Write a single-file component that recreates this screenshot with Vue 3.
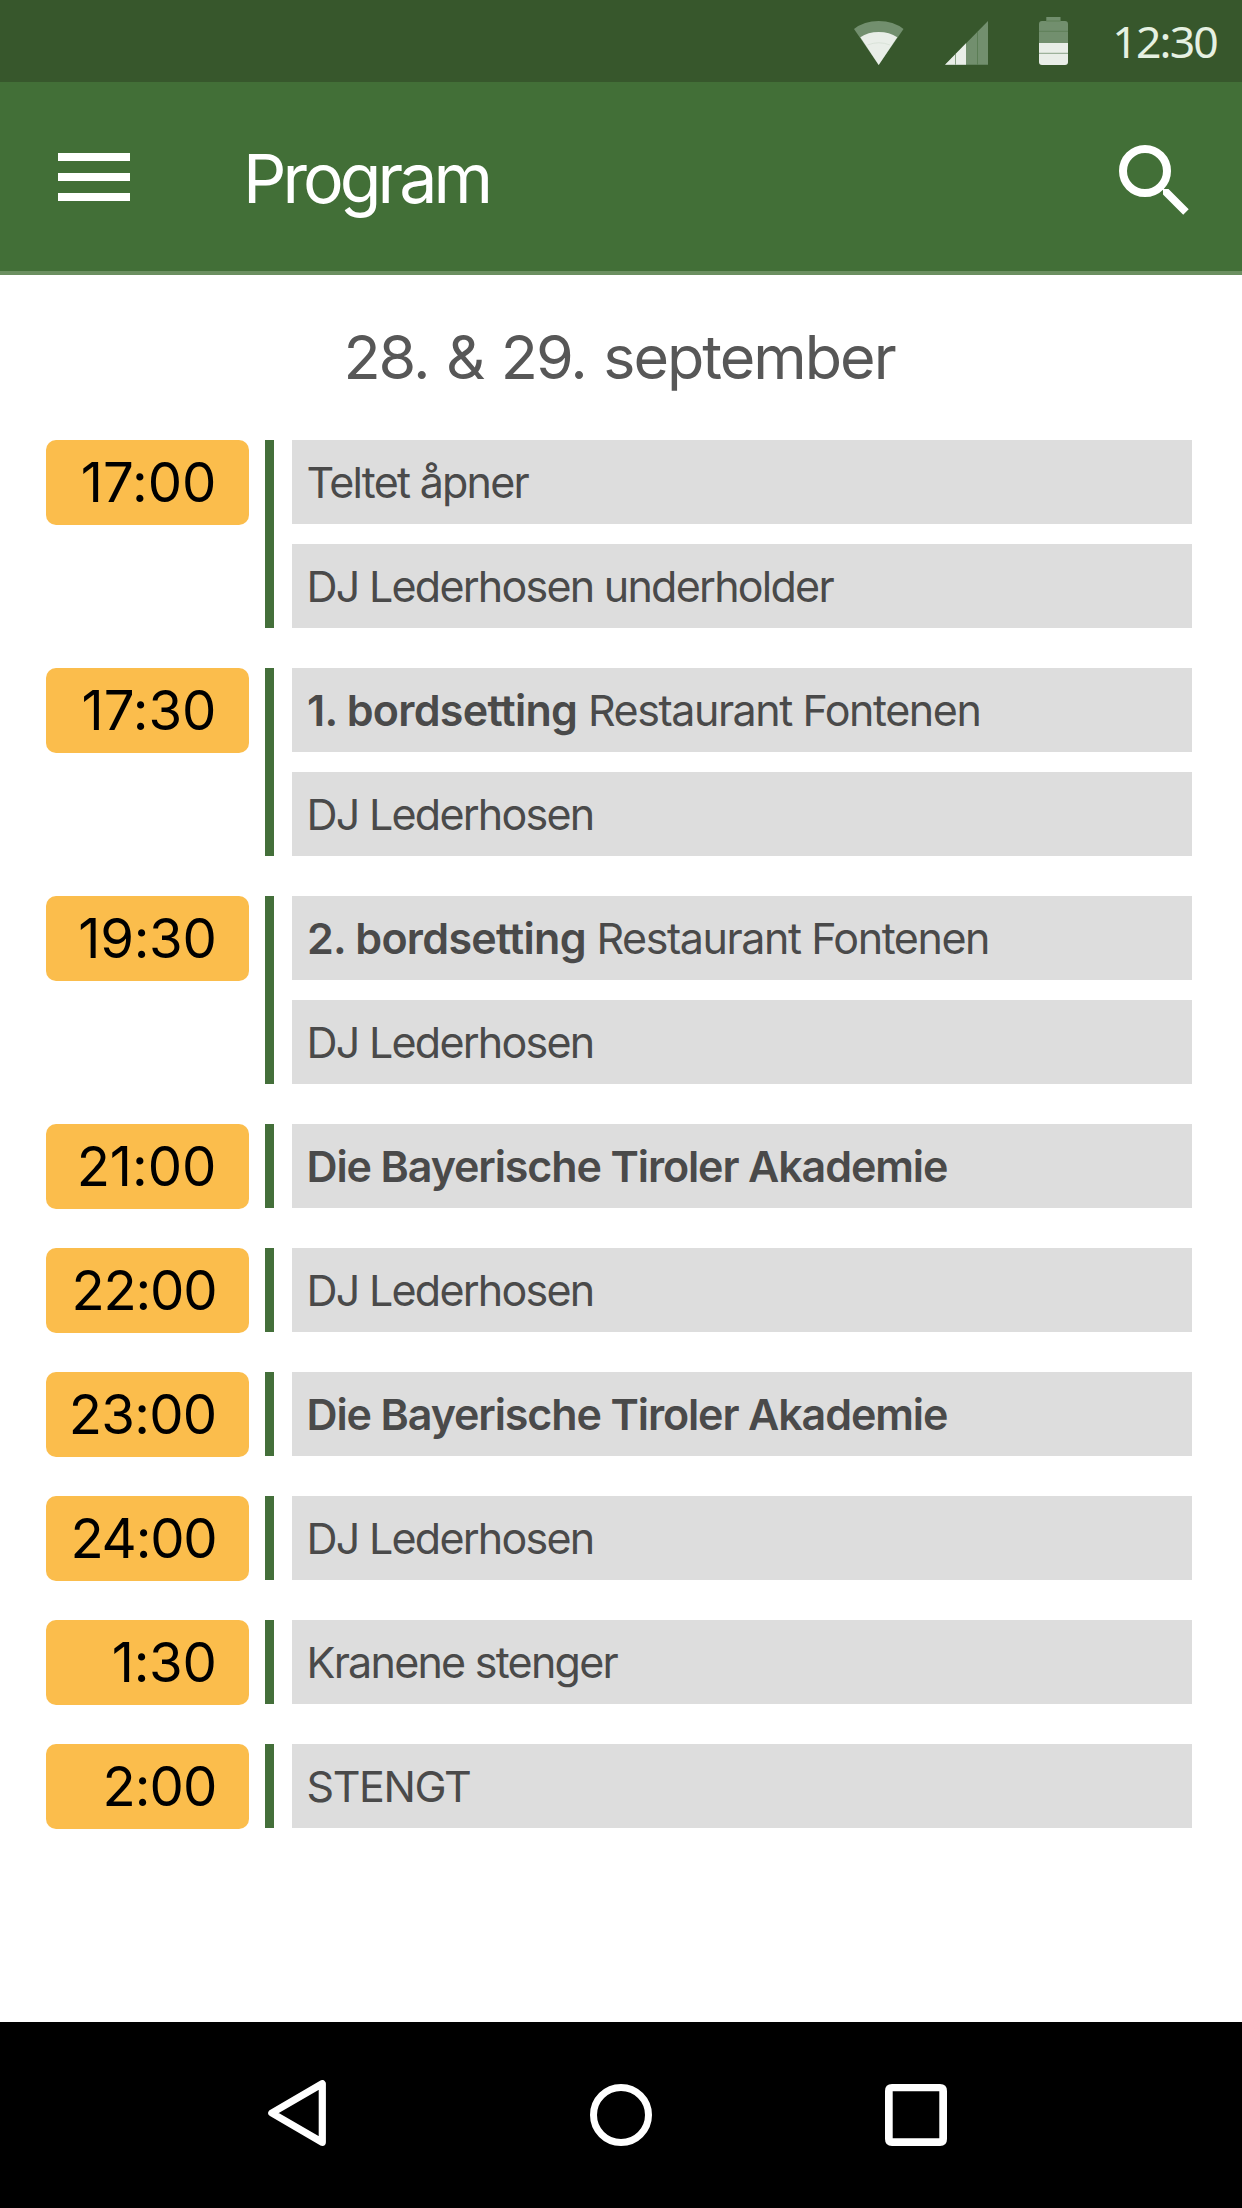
<script setup>
import { ref } from 'vue'

const title = ref('Program')
const dates = ref('28. & 29. september')

const program = ref([
  { time: '17:00', events: [{ text: 'Teltet åpner' }, { text: 'DJ Lederhosen underholder' }] },
  { time: '17:30', events: [{ lead: '1. bordsetting', text: 'Restaurant Fontenen' }, { text: 'DJ Lederhosen' }] },
  { time: '19:30', tracking: -0.3, events: [{ lead: '2. bordsetting', text: 'Restaurant Fontenen' }, { text: 'DJ Lederhosen' }] },
  { time: '21:00', events: [{ text: 'Die Bayerische Tiroler Akademie', headliner: true }] },
  { time: '22:00', tracking: -1.2, events: [{ text: 'DJ Lederhosen' }] },
  { time: '23:00', tracking: -0.7, events: [{ text: 'Die Bayerische Tiroler Akademie', headliner: true }] },
  { time: '24:00', tracking: -1.2, events: [{ text: 'DJ Lederhosen' }] },
  { time: '1:30', tracking: -0.3, events: [{ text: 'Kranene stenger' }] },
  { time: '2:00', tracking: -0.9, events: [{ text: 'STENGT', caps: true }] }
])
</script>

<template>
  <div class="screen">
    <div class="status-bar">
      <svg class="wifi" width="50" height="50" viewBox="0 0 50 50">
        <path d="M0 13 Q10 5 24.7 5 Q39.5 5 49.5 13 L24.7 49 Z" fill="#728f6e" />
        <path d="M6.3 21.3 Q14 16 24.7 16 Q35.5 16 43.3 21.3 L24.7 49 Z" fill="#e9eee8" />
        <path d="M13.5 29 Q24.7 24.5 36 29" fill="none" stroke="#cfdacd" stroke-width="0.6" />
      </svg>
      <svg class="signal" width="43" height="50" viewBox="0 0 43 50">
        <path d="M0 48.7 L43 5 V48.7 Z" fill="#728f6e" />
        <path d="M0 48.7 L21 27.3 V48.7 Z" fill="#e9eee8" />
        <path d="M10.5 38 V48.7" stroke="#728f6e" stroke-width="0.8" />
        <path d="M32.5 16 V48.7" stroke="#56794f" stroke-width="0.8" />
      </svg>
      <svg class="battery" width="29" height="50" viewBox="0 0 29 50">
        <path d="M7.3 1 H21.5 V5 H26 Q29 5 29 8 V27 H0 V8 Q0 5 3 5 H7.3 Z" fill="#728f6e" />
        <path d="M0 27 H29 V46 Q29 49 26 49 H3 Q0 49 0 46 Z" fill="#e9eee8" />
        <path d="M7.3 5 H21.5 M0 15.3 H29" stroke="#56794f" stroke-width="0.7" />
        <path d="M0 37.3 H29" stroke="#728f6e" stroke-width="0.8" />
      </svg>
      <span class="clock">12:30</span>
    </div>

    <header class="app-bar">
      <button class="menu-btn" aria-label="Meny">
        <span></span>
        <span></span>
        <span></span>
      </button>
      <h1>{{ title }}</h1>
      <button class="search-btn" aria-label="Søk">
        <svg width="72" height="72" viewBox="0 0 72 72">
          <circle cx="27" cy="27" r="22" fill="none" stroke="#fff" stroke-width="8" />
          <path d="M43 43 L46 45 L50.5 45 L70.7 65.3 L65.2 70.7 L45 50.5 L45 46 Z" fill="#fff" />
        </svg>
      </button>
    </header>

    <main>
      <h2>{{ dates }}</h2>
      <ul class="program">
        <li v-for="slot in program" :key="slot.time" class="slot">
          <div class="time" :style="{ letterSpacing: (slot.tracking || 0) + 'px' }">{{ slot.time }}</div>
          <div class="line"></div>
          <div class="events">
            <div
              v-for="(event, index) in slot.events"
              :key="index"
              class="event"
              :class="{ headliner: event.headliner, caps: event.caps, seating: event.lead }"
            >
              <template v-if="event.lead"><strong>{{ event.lead }}</strong>{{ ' ' }}</template>{{ event.text }}
            </div>
          </div>
        </li>
      </ul>
    </main>

    <nav class="nav-bar">
      <svg width="89" height="70" viewBox="0 0 89 70">
        <path d="M3.8 33 L54.3 3.7 V62.3 Z" fill="none" stroke="#fff" stroke-width="7.2" stroke-linejoin="round" />
      </svg>
      <svg width="62" height="70" viewBox="0 0 62 70">
        <circle cx="31" cy="35" r="27.5" fill="none" stroke="#fff" stroke-width="7" />
      </svg>
      <svg width="62" height="70" viewBox="0 0 62 70">
        <path d="M7 4 H55 Q62 4 62 11 V59 Q62 66 55 66 H7 Q0 66 0 59 V11 Q0 4 7 4 Z M7.7 11.3 V58.3 H54.3 V11.3 Z" fill="#fff" fill-rule="evenodd" />
      </svg>
    </nav>
  </div>
</template>

<style>
body {
  background: #fff;
}
</style>

<style scoped>
.screen {
  display: flex;
  flex-direction: column;
  width: 1242px;
  height: 2208px;
  overflow: hidden;
  background: #fff;
  font-family: Inter, 'Liberation Sans', sans-serif;
  font-feature-settings: 'calt' 0;
}

.status-bar {
  display: flex;
  align-items: center;
  justify-content: flex-end;
  flex: none;
  height: 82px;
  padding-right: 25px;
  box-sizing: border-box;
  background: #37572c;
}

.signal {
  margin-left: 41px;
}

.battery {
  margin-left: 51.5px;
}

.clock {
  width: 105px;
  margin-left: 44px;
  text-align: right;
  white-space: nowrap;
  font-family: 'Noto Sans', sans-serif;
  font-size: 44.5px;
  line-height: 82px;
  letter-spacing: -1.8px;
  color: #e6f1e2;
}

.app-bar {
  display: flex;
  align-items: center;
  flex: none;
  height: 193px;
  padding: 0 52px 0 58px;
  box-sizing: border-box;
  background: #426f37;
  border-bottom: 4px solid #6b8f60;
}

button {
  padding: 0;
  border: none;
  background: none;
  cursor: pointer;
}

.menu-btn {
  display: flex;
  flex-direction: column;
  gap: 12px;
  width: 72px;
  padding-top: 1px;
}

.menu-btn span {
  height: 8px;
  background: #fff;
}

h1 {
  flex: 1;
  margin: 3px 0 0 113px;
  font-size: 68px;
  font-weight: 400;
  line-height: 84px;
  letter-spacing: -3.95px;
  color: #fff;
}

.search-btn {
  height: 72px;
  margin-top: 7px;
}

.search-btn svg {
  display: block;
}

main {
  flex: 1;
}

h2 {
  margin: 0;
  text-align: center;
  font-size: 61px;
  font-weight: 400;
  line-height: 165px;
  letter-spacing: -2px;
  word-spacing: 2.3px;
  text-indent: -4px;
  color: #575757;
}

.program {
  display: flex;
  flex-direction: column;
  gap: 20px;
  margin: 0;
  padding: 0 50px 0 46px;
  list-style: none;
}

.slot {
  display: flex;
  margin-bottom: 20px;
}

.time {
  width: 203px;
  height: 85px;
  margin-bottom: -1px;
  padding-right: 32.5px;
  box-sizing: border-box;
  border-radius: 10px;
  background: #fbbd4c;
  text-align: right;
  font-size: 54.5px;
  line-height: 85px;
  color: #000;
}

.line {
  width: 9px;
  margin: 0 18px 0 16px;
  background: #446f3a;
}

.events {
  display: flex;
  flex: 1;
  flex-direction: column;
  gap: 20px;
}

.event {
  height: 84px;
  padding-left: 14.5px;
  background: #ddd;
  white-space: nowrap;
  font-size: 43px;
  line-height: 85px;
  letter-spacing: -1.75px;
  color: #4a4a4a;
}

.event.headliner {
  font-weight: 600;
  letter-spacing: -1.12px;
}

.event.caps {
  letter-spacing: -1.4px;
}

.event.seating {
  padding-left: 15px;
  letter-spacing: -1.45px;
}

.event strong {
  font-weight: 600;
  letter-spacing: -0.72px;
}

.nav-bar {
  display: flex;
  align-items: center;
  flex: none;
  gap: 233px;
  height: 186px;
  padding-left: 268px;
  background: #000;
}
</style>
